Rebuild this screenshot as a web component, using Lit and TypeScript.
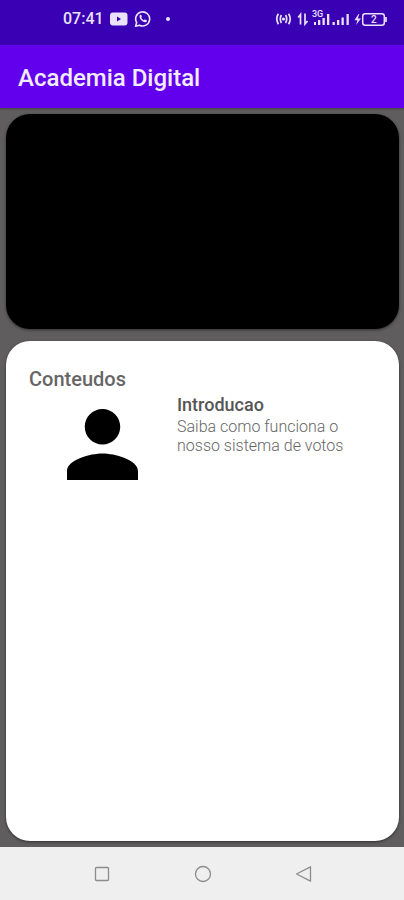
import { LitElement, html, css, svg } from "lit";
import { customElement, property } from "lit/decorators.js";

@customElement("status-bar")
class StatusBar extends LitElement {
  static styles = css`
    :host {
      display: flex;
      align-items: center;
      justify-content: space-between;
      height: 45px;
      padding: 0 16px 8px 63px;
      box-sizing: border-box;
      background: #3a00b4;
      color: #e9e2fa;
      font: 500 16px/24px Roboto, "Liberation Sans", sans-serif;
    }
    .group {
      display: flex;
      align-items: center;
    }
    .left {
      gap: 6px;
    }
    .dot {
      width: 4px;
      height: 4px;
      margin-left: 8px;
      border-radius: 50%;
      background: currentColor;
    }
    svg {
      display: block;
    }
  `;

  render() {
    return html`
      <div class="group left">
        <time>07:41</time>
        <svg width="18" height="14" viewBox="0 0 18 14" aria-label="YouTube">
          <rect x="0" y="0.5" width="17.5" height="13" rx="3" fill="currentColor" />
          <path d="M7 4.500v5l4-2.500z" fill="#3a00b4" />
        </svg>
        <svg width="18" height="18" viewBox="0 0 19 19" aria-label="WhatsApp">
          <path d="M2.8 13.2A7.4 7.4 0 1 1 5.8 16L1.7 17.2z" fill="none" stroke="currentColor" stroke-width="1.7" stroke-linejoin="round" />
          <path d="M6.2 5.3c.5-.6 1.200-.5 1.500.1l.6 1.500c.1.500-.6 1-.6 1.300.6 1.200 1.500 2 2.700 2.500.4.100.9-.9 1.300-.8l1.600.8c.5.300.3 1.200-.1 1.700-2.600 2.200-8.800-3-7-7.100z" fill="currentColor" />
        </svg>
        <span class="dot"></span>
      </div>
      <svg class="right" width="112" height="20" viewBox="0 0 112 20" aria-label="Rede e bateria">
        <g fill="none" stroke="currentColor" stroke-width="1.7">
          <path d="M2.400 4.800q-3.200 5.200 0 10.400M5.400 6q-2.200 4 0 8M12.600 4.800q3.200 5.200 0 10.400M9.600 6q2.200 4 0 8" />
          <path d="M24.500 15.500V5.500l-2.300 3M29 4.500v10.500l2.500-3" />
          <rect x="86.7" y="4.700" width="21.6" height="11.6" rx="2.5" stroke-width="1.5" />
          <path d="M110 8v5" />
        </g>
        <g fill="currentColor">
          <circle cx="7.5" cy="10" r="1.6" />
          <path d="M38 13h2v3h-2zM42 11h2.300v5h-2.300zM46.500 9h2.300v7h-2.300zM51 5h2.300v11h-2.300zM56.500 13h2.300v3h-2.300zM61 11h2.300v5h-2.300zM65.500 8.500h2.300v7.500h-2.300zM70.500 5h2.300v11h-2.300z" />
          <path d="M82.500 5l-4 6.200h3l-1.500 4.800 5-6.500h-3.200l1.500-4.500z" />
          <text x="36" y="8" font-size="9" font-weight="500">3G</text>
          <text x="95" y="14" font-size="10">2</text>
        </g>
      </svg>
    `;
  }
}

@customElement("lesson-item")
class LessonItem extends LitElement {
  @property() heading = "";
  @property() summary = "";

  static styles = css`
    :host {
      display: grid;
      grid-template-columns: 146px 1fr;
      column-gap: 2px;
      align-items: start;
    }
    .avatar {
      display: block;
      margin: 16px auto 0;
    }
    h3,
    p {
      margin: 0;
    }
    h3 {
      font-size: 18px;
      line-height: 24px;
      font-weight: 500;
      color: #555;
    }
    p {
      max-width: 180px;
      font-size: 16px;
      line-height: 19px;
      font-weight: 300;
      color: #666;
    }
  `;

  render() {
    return html`
      <svg class="avatar" width="71" height="71" viewBox="4 4 16 16" aria-hidden="true">
        <path d="M12 12c2.210 0 4-1.790 4-4s-1.790-4-4-4-4 1.790-4 4 1.790 4 4 4zm0 2c-2.670 0-8 1.340-8 4v2h16v-2c0-2.660-5.330-4-8-4z" />
      </svg>
      <div>
        <h3>${this.heading}</h3>
        <p>${this.summary}</p>
      </div>
    `;
  }
}

const navItems = [
  { label: "Recentes", shape: svg`<rect x="4.5" y="3.5" width="13" height="13" rx="1" />` },
  { label: "Início", shape: svg`<circle cx="11" cy="10" r="7.5" />` },
  { label: "Voltar", shape: svg`<path d="M3.500 10L17.500 2.800v14.400z" />` },
];

@customElement("system-nav")
class SystemNav extends LitElement {
  static styles = css`
    :host {
      display: grid;
      grid-template-columns: repeat(3, 1fr);
      height: 53px;
      padding: 0 12.5%;
      box-sizing: border-box;
      background: #efefef;
    }
    button {
      display: flex;
      align-items: center;
      justify-content: center;
      padding: 0;
      border: 0;
      background: none;
    }
    svg {
      fill: none;
      stroke: #8c8c8c;
      stroke-width: 1.3;
      stroke-linejoin: round;
    }
  `;

  render() {
    return html`${navItems.map(
      (item) => html`
        <button aria-label=${item.label}>
          <svg width="20" height="20" viewBox="0 0 20 20">${item.shape}</svg>
        </button>
      `
    )}`;
  }
}

@customElement("app-root")
class AppRoot extends LitElement {
  static styles = css`
    :host {
      display: flex;
      flex-direction: column;
      min-height: 100vh;
      background: #5f5d5d;
      font-family: Roboto, "Liberation Sans", sans-serif;
    }
    header {
      display: flex;
      align-items: center;
      height: 63px;
      padding: 2px 18px 0;
      box-sizing: border-box;
      background: #6200ee;
      color: #f3ecff;
      box-shadow: 0 1px 2px rgba(0, 0, 0, 0.3);
    }
    h1,
    h2 {
      margin: 0;
      font-weight: 500;
    }
    h1 {
      font-size: 24px;
      line-height: 32px;
    }
    h2 {
      margin-bottom: 2px;
      font-size: 20px;
      line-height: 24px;
      color: #666;
    }
    main {
      flex: 1;
      display: flex;
      flex-direction: column;
      gap: 12px;
      padding: 6px 5px 6px 6px;
    }
    .video,
    .contents {
      border-radius: 24px;
      box-shadow: 0 1px 3px rgba(0, 0, 0, 0.5);
    }
    .video {
      height: 215px;
      background: #000;
    }
    .contents {
      flex: 1;
      padding: 26px 23px;
      background: #fff;
    }
  `;

  render() {
    return html`
      <status-bar></status-bar>
      <header><h1>Academia Digital</h1></header>
      <main>
        <section class="video" aria-label="Vídeo"></section>
        <section class="contents">
          <h2>Conteudos</h2>
          <lesson-item
            heading="Introducao"
            summary="Saiba como funciona o nosso sistema de votos"
          ></lesson-item>
        </section>
      </main>
      <system-nav></system-nav>
    `;
  }
}
